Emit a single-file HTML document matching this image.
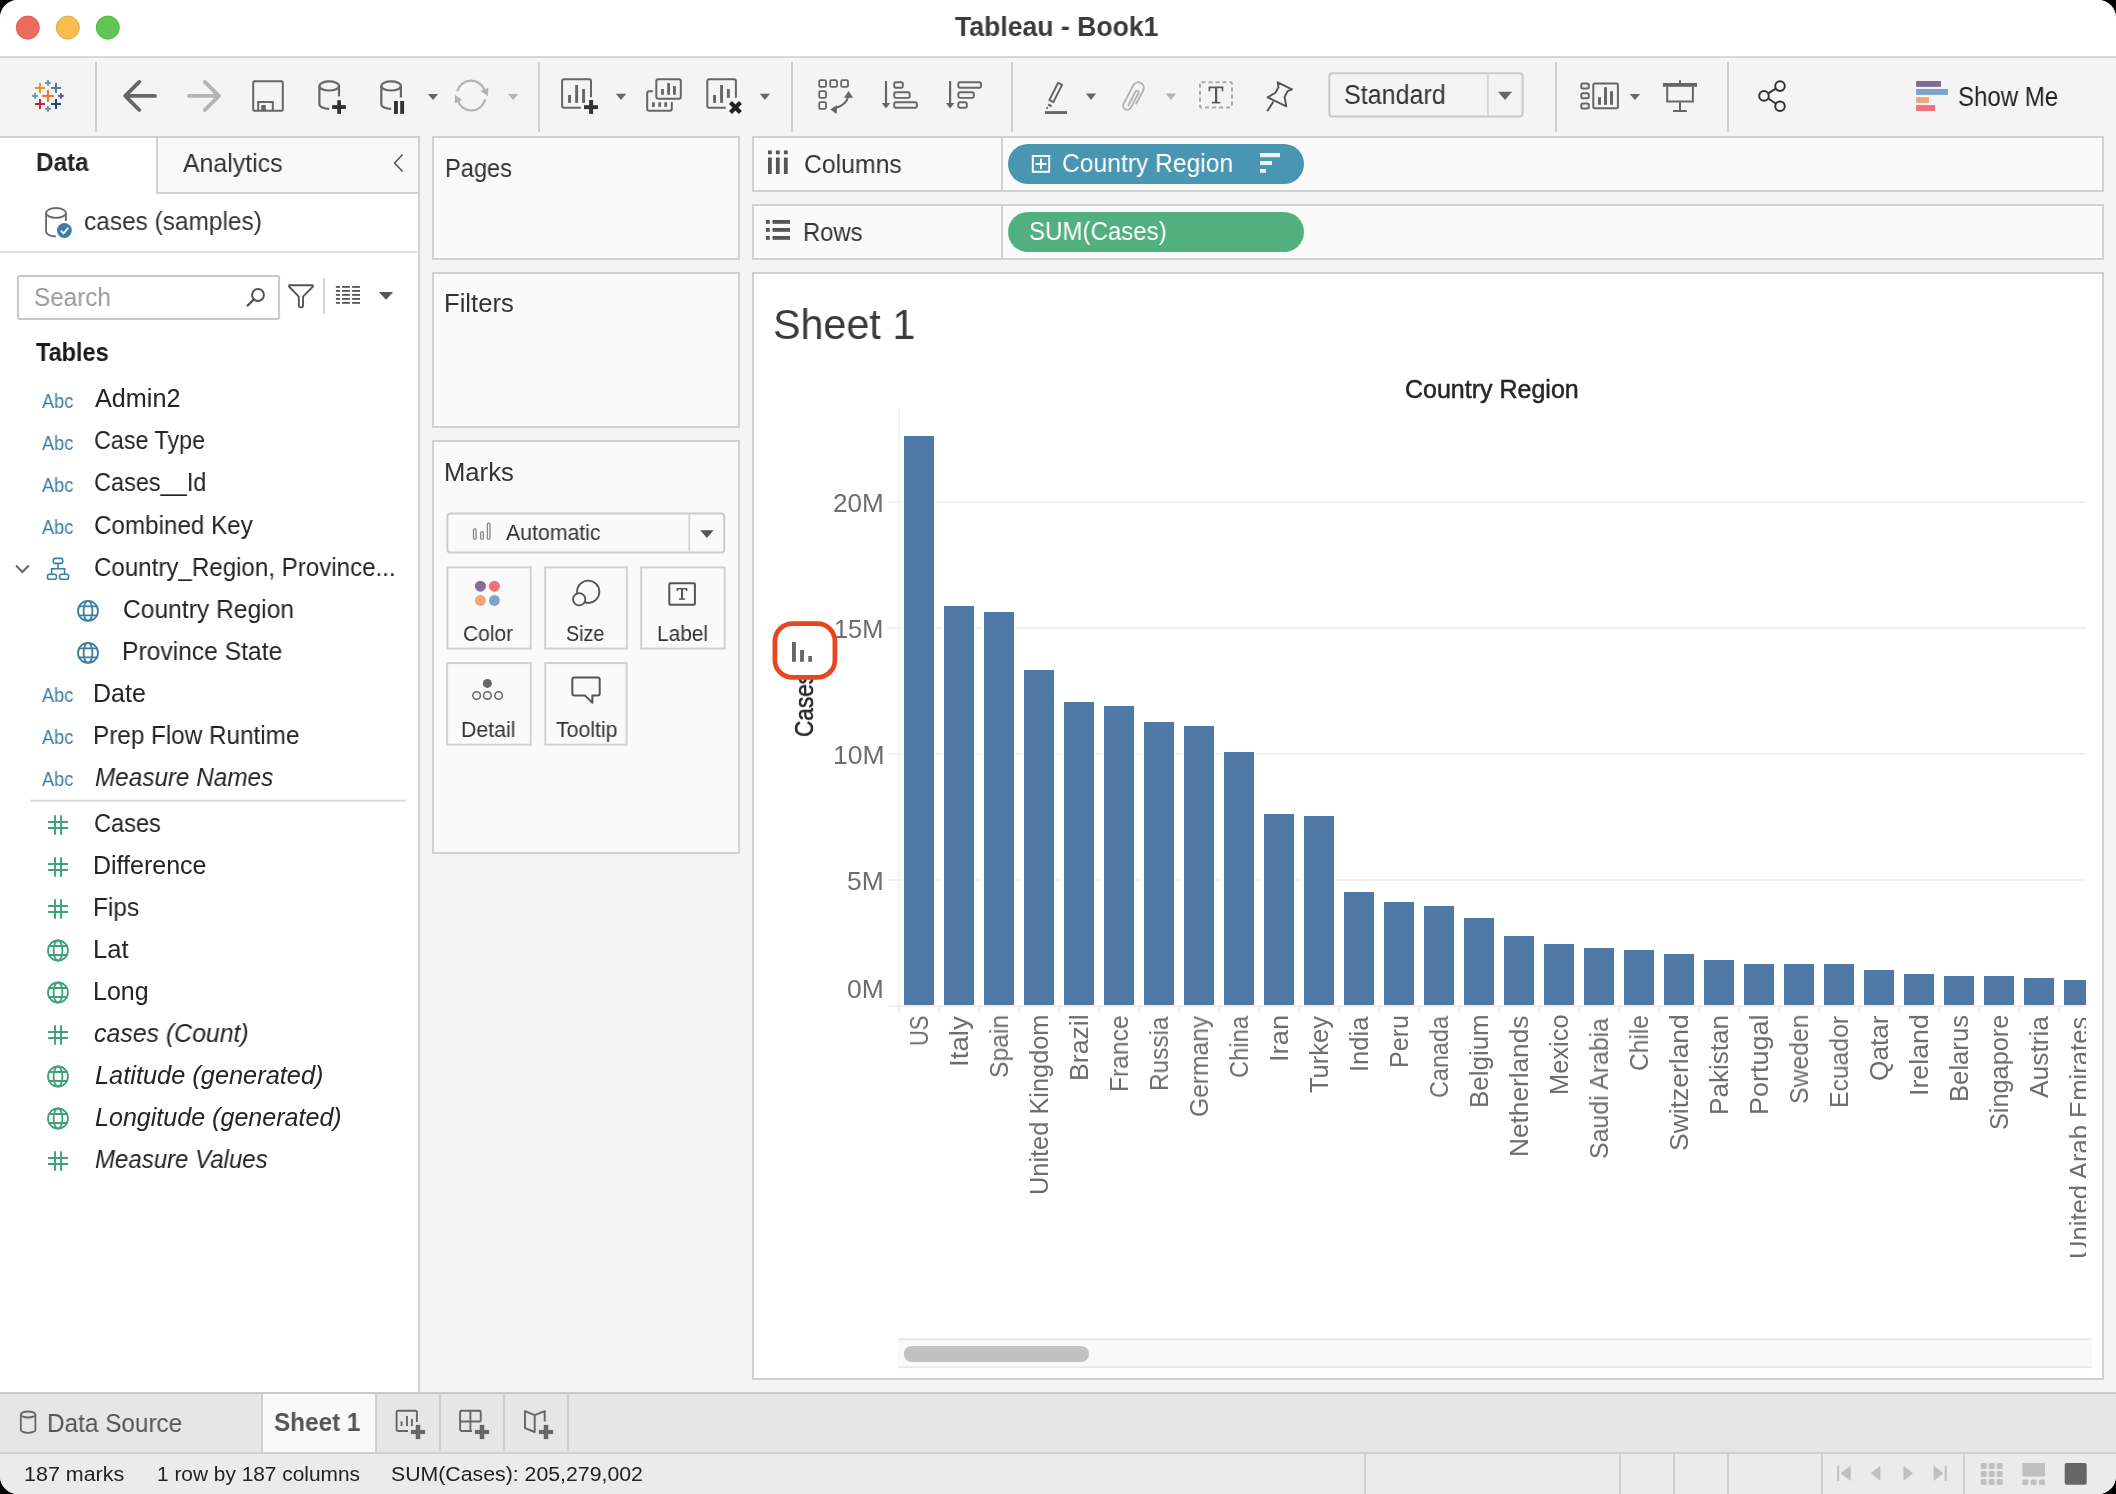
<!DOCTYPE html><html><head><meta charset="utf-8"><style>
html,body{margin:0;padding:0;background:#000;}
body{width:2116px;height:1494px;position:relative;overflow:hidden;font-family:"Liberation Sans",sans-serif;}
#win{position:absolute;left:0;top:0;width:2116px;height:1494px;border-radius:18px;overflow:hidden;background:#f3f3f3;}
.b{position:absolute;}
.t{position:absolute;line-height:1;white-space:nowrap;transform-origin:0 0;-webkit-font-smoothing:antialiased;will-change:transform;}
</style></head><body><div id="win">
<div class="b" style="left:0px;top:0px;width:2116px;height:57px;background:#ffffff;"></div>
<div class="b" style="left:0px;top:56px;width:2116px;height:2px;background:#d6d6d6;"></div>
<div class="b" style="left:0px;top:58px;width:2116px;height:1336px;background:#f4f4f4;"></div>
<div class="b" style="left:0px;top:136px;width:420px;height:1256px;background:#ffffff;"></div>
<div class="b" style="left:0px;top:136px;width:420px;height:2px;background:#d1d1d1;"></div>
<div class="b" style="left:418px;top:136px;width:2px;height:1256px;background:#d1d1d1;"></div>
<div class="b" style="left:156px;top:138px;width:262px;height:56px;background:#f8f8f8;"></div>
<div class="b" style="left:156px;top:138px;width:2px;height:56px;background:#d1d1d1;"></div>
<div class="b" style="left:156px;top:192px;width:262px;height:2px;background:#d1d1d1;"></div>
<div class="b" style="left:0px;top:251px;width:417px;height:2px;background:#e0e0e0;"></div>
<div class="b" style="left:432px;top:136px;width:308px;height:124px;background:#fafafa;border:2px solid #d1d1d1;box-sizing:border-box;"></div>
<div class="b" style="left:432px;top:272px;width:308px;height:156px;background:#fafafa;border:2px solid #d1d1d1;box-sizing:border-box;"></div>
<div class="b" style="left:432px;top:440px;width:308px;height:414px;background:#fafafa;border:2px solid #d1d1d1;box-sizing:border-box;"></div>
<div class="b" style="left:752px;top:136px;width:1352px;height:56px;background:#fafafa;border:2px solid #d1d1d1;box-sizing:border-box;"></div>
<div class="b" style="left:1001px;top:138px;width:2px;height:52px;background:#d1d1d1;"></div>
<div class="b" style="left:752px;top:204px;width:1352px;height:56px;background:#fafafa;border:2px solid #d1d1d1;box-sizing:border-box;"></div>
<div class="b" style="left:1001px;top:206px;width:2px;height:52px;background:#d1d1d1;"></div>
<div class="b" style="left:752px;top:272px;width:1352px;height:1108px;background:#ffffff;border:2px solid #d1d1d1;box-sizing:border-box;"></div>
<div class="b" style="left:0px;top:1392px;width:2116px;height:2px;background:#cacaca;"></div>
<div class="b" style="left:0px;top:1394px;width:2116px;height:58px;background:#e6e6e6;"></div>
<div class="b" style="left:261px;top:1394px;width:116px;height:58px;background:#f9f9f9;"></div>
<div class="b" style="left:261px;top:1394px;width:2px;height:58px;background:#cfcfcf;"></div>
<div class="b" style="left:375px;top:1394px;width:2px;height:58px;background:#cfcfcf;"></div>
<div class="b" style="left:439px;top:1394px;width:2px;height:57px;background:#cfcfcf;"></div>
<div class="b" style="left:503px;top:1394px;width:2px;height:57px;background:#cfcfcf;"></div>
<div class="b" style="left:567px;top:1394px;width:2px;height:57px;background:#cfcfcf;"></div>
<div class="b" style="left:0px;top:1452px;width:2116px;height:2px;background:#cfcfcf;"></div>
<div class="b" style="left:0px;top:1454px;width:2116px;height:40px;background:#ebebeb;"></div>
<div class="b" style="left:1364px;top:1454px;width:2px;height:40px;background:#d0d0d0;"></div>
<div class="b" style="left:1619px;top:1454px;width:2px;height:40px;background:#d0d0d0;"></div>
<div class="b" style="left:1673px;top:1454px;width:2px;height:40px;background:#d0d0d0;"></div>
<div class="b" style="left:1727px;top:1454px;width:2px;height:40px;background:#d0d0d0;"></div>
<div class="b" style="left:1821px;top:1454px;width:2px;height:40px;background:#d0d0d0;"></div>
<div class="b" style="left:1963px;top:1454px;width:2px;height:40px;background:#d0d0d0;"></div>
<div class="b" style="left:888px;top:501px;width:1198px;height:2px;background:#f0f0f0;"></div>
<div class="b" style="left:888px;top:627px;width:1198px;height:2px;background:#f0f0f0;"></div>
<div class="b" style="left:888px;top:753px;width:1198px;height:2px;background:#f0f0f0;"></div>
<div class="b" style="left:888px;top:879px;width:1198px;height:2px;background:#f0f0f0;"></div>
<div class="b" style="left:898px;top:408px;width:2px;height:600px;background:#f3f3f3;"></div>
<div class="b" style="left:888px;top:1005px;width:1198px;height:2px;background:#efefef;"></div>
<div class="b" style="left:898px;top:1007px;width:2px;height:6px;background:#ebebeb;"></div>
<div class="b" style="left:938px;top:1007px;width:2px;height:6px;background:#ebebeb;"></div>
<div class="b" style="left:978px;top:1007px;width:2px;height:6px;background:#ebebeb;"></div>
<div class="b" style="left:1018px;top:1007px;width:2px;height:6px;background:#ebebeb;"></div>
<div class="b" style="left:1058px;top:1007px;width:2px;height:6px;background:#ebebeb;"></div>
<div class="b" style="left:1098px;top:1007px;width:2px;height:6px;background:#ebebeb;"></div>
<div class="b" style="left:1138px;top:1007px;width:2px;height:6px;background:#ebebeb;"></div>
<div class="b" style="left:1178px;top:1007px;width:2px;height:6px;background:#ebebeb;"></div>
<div class="b" style="left:1218px;top:1007px;width:2px;height:6px;background:#ebebeb;"></div>
<div class="b" style="left:1258px;top:1007px;width:2px;height:6px;background:#ebebeb;"></div>
<div class="b" style="left:1298px;top:1007px;width:2px;height:6px;background:#ebebeb;"></div>
<div class="b" style="left:1338px;top:1007px;width:2px;height:6px;background:#ebebeb;"></div>
<div class="b" style="left:1378px;top:1007px;width:2px;height:6px;background:#ebebeb;"></div>
<div class="b" style="left:1418px;top:1007px;width:2px;height:6px;background:#ebebeb;"></div>
<div class="b" style="left:1458px;top:1007px;width:2px;height:6px;background:#ebebeb;"></div>
<div class="b" style="left:1498px;top:1007px;width:2px;height:6px;background:#ebebeb;"></div>
<div class="b" style="left:1538px;top:1007px;width:2px;height:6px;background:#ebebeb;"></div>
<div class="b" style="left:1578px;top:1007px;width:2px;height:6px;background:#ebebeb;"></div>
<div class="b" style="left:1618px;top:1007px;width:2px;height:6px;background:#ebebeb;"></div>
<div class="b" style="left:1658px;top:1007px;width:2px;height:6px;background:#ebebeb;"></div>
<div class="b" style="left:1698px;top:1007px;width:2px;height:6px;background:#ebebeb;"></div>
<div class="b" style="left:1738px;top:1007px;width:2px;height:6px;background:#ebebeb;"></div>
<div class="b" style="left:1778px;top:1007px;width:2px;height:6px;background:#ebebeb;"></div>
<div class="b" style="left:1818px;top:1007px;width:2px;height:6px;background:#ebebeb;"></div>
<div class="b" style="left:1858px;top:1007px;width:2px;height:6px;background:#ebebeb;"></div>
<div class="b" style="left:1898px;top:1007px;width:2px;height:6px;background:#ebebeb;"></div>
<div class="b" style="left:1938px;top:1007px;width:2px;height:6px;background:#ebebeb;"></div>
<div class="b" style="left:1978px;top:1007px;width:2px;height:6px;background:#ebebeb;"></div>
<div class="b" style="left:2018px;top:1007px;width:2px;height:6px;background:#ebebeb;"></div>
<div class="b" style="left:2058px;top:1007px;width:2px;height:6px;background:#ebebeb;"></div>
<div class="b" style="left:902px;top:434px;width:34px;height:571px;background:#ffffff;"></div>
<div class="b" style="left:942px;top:604px;width:34px;height:401px;background:#ffffff;"></div>
<div class="b" style="left:982px;top:610px;width:34px;height:395px;background:#ffffff;"></div>
<div class="b" style="left:1022px;top:668px;width:34px;height:337px;background:#ffffff;"></div>
<div class="b" style="left:1062px;top:700px;width:34px;height:305px;background:#ffffff;"></div>
<div class="b" style="left:1102px;top:704px;width:34px;height:301px;background:#ffffff;"></div>
<div class="b" style="left:1142px;top:720px;width:34px;height:285px;background:#ffffff;"></div>
<div class="b" style="left:1182px;top:724px;width:34px;height:281px;background:#ffffff;"></div>
<div class="b" style="left:1222px;top:750px;width:34px;height:255px;background:#ffffff;"></div>
<div class="b" style="left:1262px;top:812px;width:34px;height:193px;background:#ffffff;"></div>
<div class="b" style="left:1302px;top:814px;width:34px;height:191px;background:#ffffff;"></div>
<div class="b" style="left:1342px;top:890px;width:34px;height:115px;background:#ffffff;"></div>
<div class="b" style="left:1382px;top:900px;width:34px;height:105px;background:#ffffff;"></div>
<div class="b" style="left:1422px;top:904px;width:34px;height:101px;background:#ffffff;"></div>
<div class="b" style="left:1462px;top:916px;width:34px;height:89px;background:#ffffff;"></div>
<div class="b" style="left:1502px;top:934px;width:34px;height:71px;background:#ffffff;"></div>
<div class="b" style="left:1542px;top:942px;width:34px;height:63px;background:#ffffff;"></div>
<div class="b" style="left:1582px;top:946px;width:34px;height:59px;background:#ffffff;"></div>
<div class="b" style="left:1622px;top:948px;width:34px;height:57px;background:#ffffff;"></div>
<div class="b" style="left:1662px;top:952px;width:34px;height:53px;background:#ffffff;"></div>
<div class="b" style="left:1702px;top:958px;width:34px;height:47px;background:#ffffff;"></div>
<div class="b" style="left:1742px;top:962px;width:34px;height:43px;background:#ffffff;"></div>
<div class="b" style="left:1782px;top:962px;width:34px;height:43px;background:#ffffff;"></div>
<div class="b" style="left:1822px;top:962px;width:34px;height:43px;background:#ffffff;"></div>
<div class="b" style="left:1862px;top:968px;width:34px;height:37px;background:#ffffff;"></div>
<div class="b" style="left:1902px;top:972px;width:34px;height:33px;background:#ffffff;"></div>
<div class="b" style="left:1942px;top:974px;width:34px;height:31px;background:#ffffff;"></div>
<div class="b" style="left:1982px;top:974px;width:34px;height:31px;background:#ffffff;"></div>
<div class="b" style="left:2022px;top:976px;width:34px;height:29px;background:#ffffff;"></div>
<div class="b" style="left:2062px;top:978px;width:24px;height:27px;background:#ffffff;"></div>
<div class="b" style="left:904px;top:436px;width:30px;height:569px;background:#4e79a7;"></div>
<div class="b" style="left:944px;top:606px;width:30px;height:399px;background:#4e79a7;"></div>
<div class="b" style="left:984px;top:612px;width:30px;height:393px;background:#4e79a7;"></div>
<div class="b" style="left:1024px;top:670px;width:30px;height:335px;background:#4e79a7;"></div>
<div class="b" style="left:1064px;top:702px;width:30px;height:303px;background:#4e79a7;"></div>
<div class="b" style="left:1104px;top:706px;width:30px;height:299px;background:#4e79a7;"></div>
<div class="b" style="left:1144px;top:722px;width:30px;height:283px;background:#4e79a7;"></div>
<div class="b" style="left:1184px;top:726px;width:30px;height:279px;background:#4e79a7;"></div>
<div class="b" style="left:1224px;top:752px;width:30px;height:253px;background:#4e79a7;"></div>
<div class="b" style="left:1264px;top:814px;width:30px;height:191px;background:#4e79a7;"></div>
<div class="b" style="left:1304px;top:816px;width:30px;height:189px;background:#4e79a7;"></div>
<div class="b" style="left:1344px;top:892px;width:30px;height:113px;background:#4e79a7;"></div>
<div class="b" style="left:1384px;top:902px;width:30px;height:103px;background:#4e79a7;"></div>
<div class="b" style="left:1424px;top:906px;width:30px;height:99px;background:#4e79a7;"></div>
<div class="b" style="left:1464px;top:918px;width:30px;height:87px;background:#4e79a7;"></div>
<div class="b" style="left:1504px;top:936px;width:30px;height:69px;background:#4e79a7;"></div>
<div class="b" style="left:1544px;top:944px;width:30px;height:61px;background:#4e79a7;"></div>
<div class="b" style="left:1584px;top:948px;width:30px;height:57px;background:#4e79a7;"></div>
<div class="b" style="left:1624px;top:950px;width:30px;height:55px;background:#4e79a7;"></div>
<div class="b" style="left:1664px;top:954px;width:30px;height:51px;background:#4e79a7;"></div>
<div class="b" style="left:1704px;top:960px;width:30px;height:45px;background:#4e79a7;"></div>
<div class="b" style="left:1744px;top:964px;width:30px;height:41px;background:#4e79a7;"></div>
<div class="b" style="left:1784px;top:964px;width:30px;height:41px;background:#4e79a7;"></div>
<div class="b" style="left:1824px;top:964px;width:30px;height:41px;background:#4e79a7;"></div>
<div class="b" style="left:1864px;top:970px;width:30px;height:35px;background:#4e79a7;"></div>
<div class="b" style="left:1904px;top:974px;width:30px;height:31px;background:#4e79a7;"></div>
<div class="b" style="left:1944px;top:976px;width:30px;height:29px;background:#4e79a7;"></div>
<div class="b" style="left:1984px;top:976px;width:30px;height:29px;background:#4e79a7;"></div>
<div class="b" style="left:2024px;top:978px;width:30px;height:27px;background:#4e79a7;"></div>
<div class="b" style="left:2064px;top:980px;width:22px;height:25px;background:#4e79a7;"></div>
<svg class="b" style="left:0;top:0" width="2116" height="1494" viewBox="0 0 2116 1494"><circle cx="27.8" cy="27.6" r="11.6" fill="#ed6a5e" stroke="#d8534a" stroke-width="0.8"/><circle cx="67.8" cy="27.6" r="11.6" fill="#f5bf4f" stroke="#d9a33c" stroke-width="0.8"/><circle cx="107.8" cy="27.6" r="11.6" fill="#61c554" stroke="#4ea940" stroke-width="0.8"/><rect x="41.95" y="94.95" width="12" height="2" fill="#e8762d"/><rect x="46.95" y="89.95" width="2" height="12" fill="#e8762d"/><rect x="34.97" y="86.97" width="10" height="2" fill="#eb912b"/><rect x="38.97" y="82.97" width="2" height="10" fill="#eb912b"/><rect x="50.98" y="86.97" width="10" height="2" fill="#4f7d92"/><rect x="54.98" y="82.97" width="2" height="10" fill="#4f7d92"/><rect x="34.97" y="102.98" width="10" height="2" fill="#c72035"/><rect x="38.97" y="98.98" width="2" height="10" fill="#c72035"/><rect x="50.98" y="102.98" width="10" height="2" fill="#1f457e"/><rect x="54.98" y="98.98" width="2" height="10" fill="#1f457e"/><rect x="45.05" y="81.9" width="5.8" height="2" fill="#6f97a5"/><rect x="46.95" y="80" width="2" height="5.8" fill="#6f97a5"/><rect x="32.06" y="94.95" width="5.8" height="2" fill="#7199a6"/><rect x="33.96" y="93.05" width="2" height="5.8" fill="#7199a6"/><rect x="58.03" y="94.95" width="5.8" height="2" fill="#59629e"/><rect x="59.93" y="93.05" width="2" height="5.8" fill="#59629e"/><rect x="45.05" y="107.93" width="5.8" height="2" fill="#7e8dba"/><rect x="46.95" y="106.03" width="2" height="5.8" fill="#7e8dba"/><rect x="95" y="62" width="2" height="70" fill="#d0d0d0"/><rect x="538" y="62" width="2" height="70" fill="#d0d0d0"/><rect x="791" y="62" width="2" height="70" fill="#d0d0d0"/><rect x="1011" y="62" width="2" height="70" fill="#d0d0d0"/><rect x="1555" y="62" width="2" height="70" fill="#d0d0d0"/><rect x="1727" y="62" width="2" height="70" fill="#d0d0d0"/><path d="M139.3 81.9L125.2 95.9L139.3 110M125.5 95.9H155" fill="none" stroke="#666666" stroke-width="3.8" stroke-linecap="round" stroke-linejoin="round"/><path d="M204.8 81.9L218.9 95.9L204.8 110M218.5 95.9H189" fill="none" stroke="#b3b3b3" stroke-width="3.8" stroke-linecap="round" stroke-linejoin="round"/><rect x="253.2" y="81.2" width="29.6" height="29.6" rx="1.5" fill="none" stroke="#666666" stroke-width="2"/><path d="M258.2 110.8V102H272.8V110.8" fill="none" stroke="#666666" stroke-width="2"/><rect x="261.2" y="105" width="4.6" height="6" fill="#666666"/><ellipse cx="329.2" cy="85.9" rx="9.8" ry="4.6" fill="none" stroke="#666666" stroke-width="2.2"/><path d="M319.4 85.9V104.3A9.8 4.6 0 0 0 329.2 108.9" fill="none" stroke="#666666" stroke-width="2.2"/><path d="M339 85.9V96.5" fill="none" stroke="#666666" stroke-width="2.2"/><rect x="332.1" y="105.1" width="13.8" height="3.9" fill="#333333"/><rect x="337.2" y="100.2" width="3.8" height="13.7" fill="#333333"/><ellipse cx="391.1" cy="85.9" rx="9.8" ry="4.6" fill="none" stroke="#666666" stroke-width="2.2"/><path d="M381.3 85.9V104.3A9.8 4.6 0 0 0 391.1 108.9" fill="none" stroke="#666666" stroke-width="2.2"/><path d="M400.9 85.9V97.5" fill="none" stroke="#666666" stroke-width="2.2"/><rect x="394" y="101" width="3.9" height="12.9" fill="#333333"/><rect x="400.2" y="101" width="3.9" height="12.9" fill="#333333"/><path d="M427.8 93.9L438.2 93.9L433 100Z" fill="#666666"/><path d="M457.3 91.5A14.2 14.2 0 0 1 484.6 90.5" fill="none" stroke="#b3b3b3" stroke-width="2.2"/><path d="M485.2 99.5A14.2 14.2 0 0 1 457.8 100.5" fill="none" stroke="#b3b3b3" stroke-width="2.2"/><path d="M480.5 91L488.3 87.8L488 96.3Z" fill="#b3b3b3"/><path d="M462.3 99.8L454.8 103.5L455 95Z" fill="#b3b3b3"/><path d="M507.9 93.9L518.2 93.9L513.05 100Z" fill="#b3b3b3"/><path d="M580.8 107.8H564.1A2 2 0 0 1 562.1 105.8V81.2A2 2 0 0 1 564.1 79.2H589A2 2 0 0 1 591 81.2V97.2" fill="none" stroke="#666666" stroke-width="2"/><rect x="568.1" y="95" width="2.9" height="7.9" fill="#666666"/><rect x="575.2" y="85" width="2.9" height="17.9" fill="#666666"/><rect x="582.1" y="89" width="2.9" height="13.9" fill="#666666"/><rect x="584" y="105.2" width="14" height="3.9" fill="#333333"/><rect x="589.1" y="100" width="4" height="13.9" fill="#333333"/><path d="M615.8 93.8L626.2 93.8L621 100Z" fill="#666666"/><rect x="656.3" y="79.2" width="24.5" height="19.5" rx="2" fill="none" stroke="#666666" stroke-width="2"/><rect x="661.1" y="89" width="2.8" height="5.8" fill="#666666"/><rect x="667.2" y="83" width="2.8" height="11.8" fill="#666666"/><rect x="673" y="86.1" width="2.9" height="8.7" fill="#666666"/><path d="M652.8 91.2H649.2A2 2 0 0 0 647.2 93.2V108.7A2 2 0 0 0 649.2 110.7H669.8A2 2 0 0 0 671.8 108.7V102" fill="none" stroke="#666666" stroke-width="2"/><rect x="652" y="102.3" width="2.8" height="4.6" fill="#666666"/><rect x="658.3" y="102.3" width="2.8" height="4.6" fill="#666666"/><rect x="664.3" y="102.3" width="2.8" height="4.6" fill="#666666"/><path d="M725.8 107.8H709.3A2 2 0 0 1 707.3 105.8V81.2A2 2 0 0 1 709.3 79.2H733.9A2 2 0 0 1 735.9 81.2V97.8" fill="none" stroke="#666666" stroke-width="2"/><rect x="713.1" y="95" width="2.9" height="7.9" fill="#666666"/><rect x="720.1" y="85" width="2.9" height="17.9" fill="#666666"/><rect x="726.9" y="89" width="2.9" height="8.8" fill="#666666"/><path d="M730.5 102.5L740.4 112.4M740.4 102.5L730.5 112.4" stroke="#222" stroke-width="4.2"/><path d="M759.8 93.8L770 93.8L764.9 100Z" fill="#666666"/><rect x="819.2" y="80.1" width="6.8" height="6.8" rx="1.5" fill="none" stroke="#666666" stroke-width="1.8"/><rect x="830.2" y="80.1" width="6.8" height="6.8" rx="1.5" fill="none" stroke="#666666" stroke-width="1.8"/><rect x="841.2" y="80.1" width="6.8" height="6.8" rx="1.5" fill="none" stroke="#666666" stroke-width="1.8"/><rect x="819.2" y="91.1" width="6.8" height="6.8" rx="1.5" fill="none" stroke="#666666" stroke-width="1.8"/><rect x="819.2" y="102.1" width="6.8" height="6.8" rx="1.5" fill="none" stroke="#666666" stroke-width="1.8"/><path d="M835 108.3Q846.5 105 848.4 96" fill="none" stroke="#666666" stroke-width="2"/><path d="M848.6 91.1L853.1 97.7L843.9 97.7Z" fill="#666666"/><path d="M830.2 109.5L836.8 105.2L836.8 114Z" fill="#666666"/><path d="M886 81V104" stroke="#666666" stroke-width="2.2"/><path d="M881.8 103L890.2 103L886 108.6Z" fill="#666666"/><rect x="894.2" y="82.2" width="8.6" height="5.6" rx="1.8" fill="none" stroke="#666666" stroke-width="1.9"/><rect x="894.2" y="92.3" width="15.5" height="5.6" rx="1.8" fill="none" stroke="#666666" stroke-width="1.9"/><rect x="894.2" y="102.2" width="22.7" height="5.6" rx="1.8" fill="none" stroke="#666666" stroke-width="1.9"/><path d="M950.1 81V104" stroke="#666666" stroke-width="2.2"/><path d="M945.9 103L954.3 103L950.1 108.6Z" fill="#666666"/><rect x="958.3" y="82.2" width="22.7" height="5.6" rx="1.8" fill="none" stroke="#666666" stroke-width="1.9"/><rect x="958.3" y="92.3" width="15.5" height="5.6" rx="1.8" fill="none" stroke="#666666" stroke-width="1.9"/><rect x="958.3" y="102.2" width="8.5" height="5.6" rx="1.8" fill="none" stroke="#666666" stroke-width="1.9"/><path d="M1058.0 82.9L1062.0 84.9L1053.4 102.1L1049.4 100.1Z" fill="none" stroke="#666666" stroke-width="2" stroke-linejoin="round"/><path d="M1048.2 104.6L1051.6 106.3M1046.4 107.6L1047.9 108.4" stroke="#666666" stroke-width="2.2"/><rect x="1045" y="111.1" width="22" height="2.9" fill="#666666"/><path d="M1085.9 93.6L1096.1 93.6L1091 100Z" fill="#666666"/><path d="M1136.3 103.5L1143.4 90A5.6 5.6 0 0 0 1133.3 85.2L1123.6 103.8A4.1 4.1 0 0 0 1130.9 107.6L1138.6 92.9A1.7 1.7 0 0 0 1135.6 91.4L1128.4 105.3" fill="none" stroke="#b3b3b3" stroke-width="1.9" stroke-linecap="round"/><path d="M1165.9 93.6L1176.1 93.6L1171 100Z" fill="#b3b3b3"/><rect x="1200" y="82.2" width="32" height="25.3" rx="1.5" fill="none" stroke="#aaaaaa" stroke-width="2" stroke-dasharray="4 3"/><path d="M1209.4 91.2V87.4H1222.5V91.2" fill="none" stroke="#555" stroke-width="1.6"/><rect x="1215" y="87" width="2.2" height="15.5" fill="#555"/><rect x="1211.8" y="101.8" width="8.5" height="1.6" fill="#555"/><path d="M1277.6 82.3L1292 89.4L1287.6 91.2L1284.6 96.8L1286.3 106.4L1267.6 97.4L1275.4 92.7L1278.5 87.2Z" fill="none" stroke="#555555" stroke-width="1.9" stroke-linejoin="round"/><path d="M1273.5 101.5L1267.2 111.3" stroke="#555" stroke-width="1.9"/><rect x="1329.3" y="73.3" width="193.3" height="43.2" rx="3" fill="none" stroke="#c9c9c9" stroke-width="2"/><rect x="1486.9" y="74.3" width="1.9" height="41.2" fill="#d6d6d6"/><path d="M1498 91.8L1512 91.8L1505 100.1Z" fill="#666666"/><rect x="1581.3" y="83.5" width="7.5" height="5" rx="1.5" fill="none" stroke="#666666" stroke-width="2"/><rect x="1581.3" y="93.3" width="7.5" height="5" rx="1.5" fill="none" stroke="#666666" stroke-width="2"/><rect x="1581.3" y="103.4" width="7.5" height="5" rx="1.5" fill="none" stroke="#666666" stroke-width="2"/><rect x="1593.3" y="83.5" width="24.6" height="24.8" rx="1.5" fill="none" stroke="#666666" stroke-width="2"/><rect x="1598" y="97.2" width="3" height="7.6" fill="#666666"/><rect x="1604" y="87.2" width="3" height="17.6" fill="#666666"/><rect x="1610" y="91.2" width="3" height="13.6" fill="#666666"/><path d="M1629.8 93.9L1640.1 93.9L1634.95 99.9Z" fill="#666666"/><rect x="1662.9" y="83" width="34.1" height="3.8" fill="#666666"/><rect x="1679" y="80.3" width="2" height="3" fill="#666666"/><path d="M1667.2 86.8V101.6H1692.9V86.8" fill="none" stroke="#666666" stroke-width="2"/><path d="M1680 102.6V110.8M1673 111H1686.8" fill="none" stroke="#666666" stroke-width="2"/><circle cx="1780" cy="86.1" r="4.8" fill="none" stroke="#333333" stroke-width="2"/><circle cx="1764" cy="95.9" r="4.8" fill="none" stroke="#333333" stroke-width="2"/><circle cx="1780" cy="106.2" r="4.8" fill="none" stroke="#333333" stroke-width="2"/><path d="M1768.2 93.3L1775.8 88.6M1768.2 98.5L1775.8 103.5" stroke="#333333" stroke-width="2"/><rect x="1916.1" y="81" width="24.9" height="5.9" fill="#816b96"/><rect x="1916.1" y="89" width="31.9" height="5.9" fill="#7fa4cb"/><rect x="1916.1" y="97.2" width="12.8" height="5.7" fill="#f0a57b"/><rect x="1916.1" y="105.1" width="19" height="5.9" fill="#f2707f"/><path d="M402.6 154.5L394.6 163L402.6 171.5" fill="none" stroke="#555" stroke-width="1.6"/><ellipse cx="56" cy="212.9" rx="9.9" ry="4.9" fill="none" stroke="#666666" stroke-width="1.8"/><path d="M46.1 212.9V231.6A9.9 4.9 0 0 0 55.7 236.5" fill="none" stroke="#666666" stroke-width="1.8"/><path d="M65.9 212.9V221" fill="none" stroke="#666666" stroke-width="1.8"/><circle cx="64.4" cy="230.5" r="7.4" fill="#3a80a3"/><path d="M60.7 230.7L63.5 233.4L68.2 227.9" fill="none" stroke="#fff" stroke-width="1.8"/><rect x="17.9" y="275.9" width="261.2" height="43.2" rx="2" fill="#fff" stroke="#c8c8c8" stroke-width="2"/><circle cx="258" cy="295" r="5.9" fill="none" stroke="#555" stroke-width="2"/><path d="M253.6 299.6L247.6 305.6" stroke="#555" stroke-width="2.2" stroke-linecap="round"/><path d="M289.5 284.9A1 1 0 0 1 290.3 285.2H312.3A1 1 0 0 1 313 286.5L303 296.6V305.6A1.8 1.8 0 0 1 301.2 307.4H300.6A1.8 1.8 0 0 1 298.8 305.6V296.6L289 286.5Z" fill="none" stroke="#555" stroke-width="1.9" stroke-linejoin="round"/><rect x="323" y="278.2" width="2" height="35.5" fill="#d4d4d4"/><rect x="335.9" y="286" width="4.1" height="1.8" fill="#555"/><rect x="342.1" y="286" width="7.8" height="1.8" fill="#555"/><rect x="352.1" y="286" width="7.9" height="1.8" fill="#555"/><rect x="335.9" y="290" width="4.1" height="1.8" fill="#555"/><rect x="342.1" y="290" width="7.8" height="1.8" fill="#555"/><rect x="352.1" y="290" width="7.9" height="1.8" fill="#555"/><rect x="335.9" y="294" width="4.1" height="1.8" fill="#555"/><rect x="342.1" y="294" width="7.8" height="1.8" fill="#555"/><rect x="352.1" y="294" width="7.9" height="1.8" fill="#555"/><rect x="335.9" y="298" width="4.1" height="1.8" fill="#555"/><rect x="342.1" y="298" width="7.8" height="1.8" fill="#555"/><rect x="352.1" y="298" width="7.9" height="1.8" fill="#555"/><rect x="335.9" y="302" width="4.1" height="1.8" fill="#555"/><rect x="342.1" y="302" width="7.8" height="1.8" fill="#555"/><rect x="352.1" y="302" width="7.9" height="1.8" fill="#555"/><path d="M378.9 292L393.1 292L386 299.8Z" fill="#555"/><path d="M16 565.5L22.4 572L28.8 565.5" fill="none" stroke="#666666" stroke-width="2"/><rect x="53.3" y="558.4" width="9.4" height="5" rx="1.8" fill="none" stroke="#3c7fa3" stroke-width="1.6"/><path d="M58 563.4V568.7M51.6 574.3V568.7H64.6V574.3" fill="none" stroke="#3c7fa3" stroke-width="1.6"/><rect x="47.5" y="574.3" width="8.9" height="5" rx="1.8" fill="none" stroke="#3c7fa3" stroke-width="1.6"/><rect x="59.6" y="574.3" width="8.9" height="5" rx="1.8" fill="none" stroke="#3c7fa3" stroke-width="1.6"/><circle cx="88" cy="610.9" r="10" fill="none" stroke="#3c7fa3" stroke-width="1.8"/><ellipse cx="88" cy="610.9" rx="4.4" ry="10" fill="none" stroke="#3c7fa3" stroke-width="1.8"/><path d="M78.5 606.4H97.5M78.5 615.4H97.5" stroke="#3c7fa3" stroke-width="1.8"/><circle cx="88" cy="652.9" r="10" fill="none" stroke="#3c7fa3" stroke-width="1.8"/><ellipse cx="88" cy="652.9" rx="4.4" ry="10" fill="none" stroke="#3c7fa3" stroke-width="1.8"/><path d="M78.5 648.4H97.5M78.5 657.4H97.5" stroke="#3c7fa3" stroke-width="1.8"/><rect x="30" y="799.7" width="376" height="2" fill="#dcdcdc"/><path d="M55 815.3V834.7M61 815.3V834.7M48.1 822H67.9M48.1 828H67.9" stroke="#40a078" stroke-width="1.9"/><path d="M55 857.3V876.7M61 857.3V876.7M48.1 864H67.9M48.1 870H67.9" stroke="#40a078" stroke-width="1.9"/><path d="M55 899.3V918.7M61 899.3V918.7M48.1 906H67.9M48.1 912H67.9" stroke="#40a078" stroke-width="1.9"/><circle cx="58" cy="950.5" r="10" fill="none" stroke="#40a078" stroke-width="1.8"/><ellipse cx="58" cy="950.5" rx="4.4" ry="10" fill="none" stroke="#40a078" stroke-width="1.8"/><path d="M48.5 946H67.5M48.5 955H67.5" stroke="#40a078" stroke-width="1.8"/><circle cx="58" cy="992.5" r="10" fill="none" stroke="#40a078" stroke-width="1.8"/><ellipse cx="58" cy="992.5" rx="4.4" ry="10" fill="none" stroke="#40a078" stroke-width="1.8"/><path d="M48.5 988H67.5M48.5 997H67.5" stroke="#40a078" stroke-width="1.8"/><path d="M55 1025.3V1044.7M61 1025.3V1044.7M48.1 1032H67.9M48.1 1038H67.9" stroke="#40a078" stroke-width="1.9"/><circle cx="58" cy="1076.5" r="10" fill="none" stroke="#40a078" stroke-width="1.8"/><ellipse cx="58" cy="1076.5" rx="4.4" ry="10" fill="none" stroke="#40a078" stroke-width="1.8"/><path d="M48.5 1072H67.5M48.5 1081H67.5" stroke="#40a078" stroke-width="1.8"/><circle cx="58" cy="1118.5" r="10" fill="none" stroke="#40a078" stroke-width="1.8"/><ellipse cx="58" cy="1118.5" rx="4.4" ry="10" fill="none" stroke="#40a078" stroke-width="1.8"/><path d="M48.5 1114H67.5M48.5 1123H67.5" stroke="#40a078" stroke-width="1.8"/><path d="M55 1151.3V1170.7M61 1151.3V1170.7M48.1 1158H67.9M48.1 1164H67.9" stroke="#40a078" stroke-width="1.9"/><path d="M768 150.5h3.8v3.8h-3.8zM775.9 150.5h3.8v3.8h-3.8zM783.9 150.5h3.8v3.8h-3.8z" fill="#555"/><path d="M768 157.5h3.8v16.5h-3.8zM775.9 157.5h3.8v16.5h-3.8zM783.9 157.5h3.8v16.5h-3.8z" fill="#555"/><rect x="766" y="220" width="3.8" height="3.8" fill="#555"/><rect x="772.5" y="220" width="17.5" height="3.8" fill="#555"/><rect x="766" y="228" width="3.8" height="3.8" fill="#555"/><rect x="772.5" y="228" width="17.5" height="3.8" fill="#555"/><rect x="766" y="236" width="3.8" height="3.8" fill="#555"/><rect x="772.5" y="236" width="17.5" height="3.8" fill="#555"/><rect x="1008" y="144" width="296" height="40" rx="20" fill="#4996b2"/><rect x="1008" y="212" width="296" height="40" rx="20" fill="#52b07f"/><rect x="1032.8" y="156" width="16.4" height="15.8" fill="none" stroke="#fff" stroke-width="2"/><path d="M1041 158.5V169.3M1035.6 163.9H1046.4" stroke="#fff" stroke-width="2"/><rect x="1260" y="153" width="20" height="4.2" fill="#eef3f6"/><rect x="1260" y="161" width="12" height="4" fill="#eef3f6"/><rect x="1260" y="169" width="6" height="3.8" fill="#eef3f6"/><rect x="447.4" y="513.4" width="276.9" height="39.1" rx="3" fill="#fafafa" stroke="#cccccc" stroke-width="2"/><rect x="688.4" y="514.4" width="1.8" height="37.1" fill="#d4d4d4"/><path d="M700.2 530.2L713.6 530.2L706.9 537.9Z" fill="#555"/><rect x="473.5" y="528.9" width="2.6" height="10.3" rx="1" fill="none" stroke="#888" stroke-width="1.3"/><rect x="480.7" y="531.7" width="2.6" height="7.5" rx="1" fill="none" stroke="#888" stroke-width="1.3"/><rect x="487.4" y="523.2" width="2.6" height="16" rx="1" fill="none" stroke="#888" stroke-width="1.3"/><rect x="447.4" y="567.3" width="83.3" height="81.3" fill="none" stroke="#d0d0d0" stroke-width="2"/><rect x="545.2" y="567.3" width="81.7" height="81.3" fill="none" stroke="#d0d0d0" stroke-width="2"/><rect x="641.2" y="567.3" width="83.5" height="81.3" fill="none" stroke="#d0d0d0" stroke-width="2"/><rect x="447.1" y="663.1" width="83.6" height="81.6" fill="none" stroke="#d0d0d0" stroke-width="2"/><rect x="545.3" y="663.1" width="81.3" height="81.6" fill="none" stroke="#d0d0d0" stroke-width="2"/><circle cx="480.4" cy="586.2" r="5.5" fill="#866e9c"/><circle cx="494.4" cy="586.2" r="5.5" fill="#f0707e"/><circle cx="480.4" cy="600.4" r="5.5" fill="#f0a57a"/><circle cx="494.4" cy="600.4" r="5.5" fill="#7fa5cc"/><circle cx="588.2" cy="591.8" r="11.2" fill="none" stroke="#555" stroke-width="1.8"/><circle cx="579.2" cy="599.3" r="6.1" fill="#fafafa" stroke="#555" stroke-width="1.8"/><rect x="669.3" y="583.3" width="25.6" height="21.4" rx="1" fill="none" stroke="#555" stroke-width="2"/><path d="M677.3 591V588.8H686.6V591" fill="none" stroke="#555" stroke-width="1.5"/><rect x="681" y="588.5" width="2.1" height="10.6" fill="#555"/><rect x="678.9" y="598.4" width="6.2" height="1.4" fill="#555"/><circle cx="487.4" cy="683.4" r="4.5" fill="#666"/><circle cx="476.6" cy="695.5" r="3.8" fill="none" stroke="#666" stroke-width="1.5"/><circle cx="487.4" cy="695.5" r="3.8" fill="none" stroke="#666" stroke-width="1.5"/><circle cx="498.6" cy="695.5" r="3.8" fill="none" stroke="#666" stroke-width="1.5"/><path d="M585.1 695.6H574.3A2 2 0 0 1 572.3 693.6V679.4A2 2 0 0 1 574.3 677.4H597.7A2 2 0 0 1 599.7 679.4V693.6A2 2 0 0 1 597.7 695.6H592.4V702.7Z" fill="none" stroke="#555" stroke-width="2" stroke-linejoin="round"/><rect x="898" y="1338.3" width="1194" height="29.7" fill="#f9f9f9"/><rect x="898" y="1338.3" width="1194" height="1.8" fill="#e8e8e8"/><rect x="898" y="1366.3" width="1194" height="1.8" fill="#e8e8e8"/><rect x="903.8" y="1346" width="185.2" height="16" rx="8" fill="#c1c1c1"/><ellipse cx="28.1" cy="1414.5" rx="7.3" ry="3" fill="none" stroke="#666666" stroke-width="1.8"/><path d="M20.8 1414.5V1429.8A7.3 3 0 0 0 35.4 1429.8V1414.5" fill="none" stroke="#666666" stroke-width="1.8"/><path d="M408 1431H398.1A1.5 1.5 0 0 1 396.6 1429.5V1412.2A1.5 1.5 0 0 1 398.1 1410.7H415.4A1.5 1.5 0 0 1 416.9 1412.2V1421.9" fill="none" stroke="#666666" stroke-width="1.9"/><rect x="400.6" y="1421.3" width="1.9" height="4.7" fill="#666666"/><rect x="406" y="1416" width="1.9" height="10" fill="#666666"/><rect x="411" y="1419" width="1.9" height="7" fill="#666666"/><rect x="410.95" y="1429.95" width="14.1" height="4.1" fill="#666666"/><rect x="415.75" y="1424.9" width="4.5" height="14.2" fill="#666666"/><path d="M472 1431H461.6A1.5 1.5 0 0 1 460.1 1429.5V1412.2A1.5 1.5 0 0 1 461.6 1410.7H479.2A1.5 1.5 0 0 1 480.7 1412.2V1421.5M460.1 1421.5H480.7M470.4 1410.7V1431" fill="none" stroke="#666666" stroke-width="1.9"/><rect x="474.95" y="1429.95" width="14.1" height="4.1" fill="#666666"/><rect x="479.75" y="1424.9" width="4.5" height="14.2" fill="#666666"/><path d="M525 1411.2L534.7 1415.2V1432L525 1428.2Z M534.7 1415.2L544.7 1411.2V1421.5" fill="none" stroke="#666666" stroke-width="1.9" stroke-linejoin="round"/><rect x="538.95" y="1429.95" width="14.1" height="4.1" fill="#666666"/><rect x="543.75" y="1424.9" width="4.5" height="14.2" fill="#666666"/><rect x="1837.2" y="1465.6" width="2" height="15.4" fill="#c0c0c0"/><path d="M1840.5 1473.3L1850.7 1465.6V1481Z" fill="#c0c0c0"/><path d="M1870.8 1473.3L1880.4 1465.6V1481Z" fill="#c0c0c0"/><path d="M1913 1473.3L1903.5 1465.6V1481Z" fill="#c0c0c0"/><rect x="1944.7" y="1465.6" width="2" height="15.4" fill="#c0c0c0"/><path d="M1943.5 1473.3L1933.6 1465.6V1481Z" fill="#c0c0c0"/><rect x="1980.7" y="1463" width="6" height="6" rx="1" fill="#c0c0c0"/><rect x="1980.7" y="1471" width="6" height="6" rx="1" fill="#c0c0c0"/><rect x="1980.7" y="1479" width="6" height="6" rx="1" fill="#c0c0c0"/><rect x="1988.7" y="1463" width="6" height="6" rx="1" fill="#c0c0c0"/><rect x="1988.7" y="1471" width="6" height="6" rx="1" fill="#c0c0c0"/><rect x="1988.7" y="1479" width="6" height="6" rx="1" fill="#c0c0c0"/><rect x="1996.7" y="1463" width="6" height="6" rx="1" fill="#c0c0c0"/><rect x="1996.7" y="1471" width="6" height="6" rx="1" fill="#c0c0c0"/><rect x="1996.7" y="1479" width="6" height="6" rx="1" fill="#c0c0c0"/><rect x="2022.3" y="1463" width="22.7" height="13.4" rx="1" fill="#c0c0c0"/><rect x="2022.3" y="1479.5" width="6" height="5.5" rx="1" fill="#c0c0c0"/><rect x="2030.65" y="1479.5" width="6" height="5.5" rx="1" fill="#c0c0c0"/><rect x="2039" y="1479.5" width="6" height="5.5" rx="1" fill="#c0c0c0"/><rect x="2064.7" y="1463" width="22" height="21.8" rx="2" fill="#666"/></svg>
<div class="t" style="font-size:27px;color:#3b3b3b;font-weight:700;left:955.40px;top:14.40px;transform:scaleX(0.9851);">Tableau - Book1</div>
<div class="t" style="font-size:27px;color:#333;left:1343.62px;top:82.20px;transform:scaleX(0.9289);">Standard</div>
<div class="t" style="font-size:27px;color:#222;left:1958.25px;top:83.60px;transform:scaleX(0.8905);">Show Me</div>
<div class="t" style="font-size:25.5px;color:#262626;font-weight:700;left:35.88px;top:150.40px;transform:scaleX(0.9528);">Data</div>
<div class="t" style="font-size:26px;color:#333;left:183.00px;top:150.00px;transform:scaleX(0.9571);">Analytics</div>
<div class="t" style="font-size:25px;color:#333;left:83.84px;top:208.90px;transform:scaleX(0.9771);">cases (samples)</div>
<div class="t" style="font-size:25px;color:#9a9a9a;left:33.84px;top:284.70px;transform:scaleX(0.9711);">Search</div>
<div class="t" style="font-size:25px;color:#1a1a1a;font-weight:700;left:36.20px;top:339.90px;transform:scaleX(0.9393);">Tables</div>
<div class="t" style="font-size:25px;color:#242424;left:94.90px;top:386.30px;transform:scaleX(1.0077);">Admin2</div>
<div class="t" style="font-size:25px;color:#242424;left:93.81px;top:428.37px;transform:scaleX(0.9325);">Case Type</div>
<div class="t" style="font-size:25px;color:#242424;left:93.80px;top:470.44px;transform:scaleX(0.9406);">Cases__Id</div>
<div class="t" style="font-size:25px;color:#242424;left:93.77px;top:512.51px;transform:scaleX(0.9680);">Combined Key</div>
<div class="t" style="font-size:25px;color:#242424;left:93.77px;top:554.58px;transform:scaleX(0.9647);">Country_Region, Province...</div>
<div class="t" style="font-size:25px;color:#242424;left:123.25px;top:596.65px;transform:scaleX(0.9846);">Country Region</div>
<div class="t" style="font-size:25px;color:#242424;left:122.48px;top:638.72px;transform:scaleX(0.9855);">Province State</div>
<div class="t" style="font-size:25px;color:#242424;left:93.06px;top:680.79px;transform:scaleX(0.9911);">Date</div>
<div class="t" style="font-size:25px;color:#242424;left:93.10px;top:722.86px;transform:scaleX(0.9709);">Prep Flow Runtime</div>
<div class="t" style="font-size:25px;color:#242424;font-style:italic;left:94.62px;top:764.93px;transform:scaleX(0.9714);">Measure Names</div>
<div class="t" style="font-size:25px;color:#242424;left:93.89px;top:811.00px;transform:scaleX(0.9433);">Cases</div>
<div class="t" style="font-size:25px;color:#242424;left:93.05px;top:853.00px;transform:scaleX(0.9980);">Difference</div>
<div class="t" style="font-size:25px;color:#242424;left:93.09px;top:895.00px;transform:scaleX(0.9776);">Fips</div>
<div class="t" style="font-size:25px;color:#242424;left:93.00px;top:937.00px;transform:scaleX(1.0248);">Lat</div>
<div class="t" style="font-size:25px;color:#242424;left:93.06px;top:979.00px;transform:scaleX(0.9912);">Long</div>
<div class="t" style="font-size:25px;color:#242424;font-style:italic;left:94.22px;top:1021.00px;transform:scaleX(0.9945);">cases (Count)</div>
<div class="t" style="font-size:25px;color:#242424;font-style:italic;left:94.60px;top:1063.00px;transform:scaleX(1.0149);">Latitude (generated)</div>
<div class="t" style="font-size:25px;color:#242424;font-style:italic;left:94.61px;top:1105.00px;transform:scaleX(1.0027);">Longitude (generated)</div>
<div class="t" style="font-size:25px;color:#242424;font-style:italic;left:94.62px;top:1147.00px;transform:scaleX(0.9606);">Measure Values</div>
<div class="t" style="font-size:25.5px;color:#333;left:444.75px;top:156.00px;transform:scaleX(0.9264);">Pages</div>
<div class="t" style="font-size:25.5px;color:#333;left:444.00px;top:291.20px;transform:scaleX(1.0056);">Filters</div>
<div class="t" style="font-size:25.5px;color:#333;left:444.00px;top:459.80px;transform:scaleX(1.0056);">Marks</div>
<div class="t" style="font-size:21.5px;color:#333;left:506.30px;top:523.20px;transform:scaleX(0.9899);">Automatic</div>
<div class="t" style="font-size:21.5px;color:#333;left:463.02px;top:623.60px;transform:scaleX(0.9748);">Color</div>
<div class="t" style="font-size:21.5px;color:#333;left:565.88px;top:623.60px;transform:scaleX(0.9185);">Size</div>
<div class="t" style="font-size:21.5px;color:#333;left:657.27px;top:623.60px;transform:scaleX(0.9715);">Label</div>
<div class="t" style="font-size:21.5px;color:#333;left:460.54px;top:719.50px;transform:scaleX(0.9890);">Detail</div>
<div class="t" style="font-size:21.5px;color:#333;left:556.17px;top:719.50px;transform:scaleX(0.9878);">Tooltip</div>
<div class="t" style="font-size:26px;color:#333;left:803.84px;top:150.80px;transform:scaleX(0.9527);">Columns</div>
<div class="t" style="font-size:26px;color:#333;left:803.14px;top:218.90px;transform:scaleX(0.9152);">Rows</div>
<div class="t" style="font-size:26px;color:#ffffff;left:1061.65px;top:149.70px;transform:scaleX(0.9473);">Country Region</div>
<div class="t" style="font-size:25px;color:#ffffff;left:1029.45px;top:218.60px;transform:scaleX(0.9625);">SUM(Cases)</div>
<div class="t" style="font-size:42px;color:#3a3a3a;left:773.41px;top:304.30px;transform:scaleX(0.9826);">Sheet 1</div>
<div class="t" style="font-size:25px;color:#262626;left:1404.63px;top:377.00px;-webkit-text-stroke:0.5px #262626;">Country Region</div>
<div class="t" style="font-size:25px;color:#6e6e6e;left:833.08px;top:491.10px;transform:scaleX(1.0420);">20M</div>
<div class="t" style="font-size:25px;color:#6e6e6e;left:834.42px;top:617.00px;transform:scaleX(1.0135);">15M</div>
<div class="t" style="font-size:25px;color:#6e6e6e;left:832.54px;top:742.70px;transform:scaleX(1.0620);">10M</div>
<div class="t" style="font-size:25px;color:#6e6e6e;left:847.47px;top:868.50px;transform:scaleX(1.0569);">5M</div>
<div class="t" style="font-size:25px;color:#6e6e6e;left:847.47px;top:977.00px;transform:scaleX(1.0569);">0M</div>
<div class="t" style="font-size:26px;color:#555;left:47.10px;top:1410.30px;transform:scaleX(0.9354);">Data Source</div>
<div class="t" style="font-size:26px;color:#555;font-weight:700;left:274.22px;top:1409.30px;transform:scaleX(0.9340);">Sheet 1</div>
<div class="t" style="font-size:20.5px;color:#222;left:24.46px;top:1463.90px;transform:scaleX(1.0471);">187 marks</div>
<div class="t" style="font-size:20.5px;color:#222;left:156.70px;top:1463.90px;transform:scaleX(1.0178);">1 row by 187 columns</div>
<div class="t" style="font-size:20.5px;color:#222;left:391.34px;top:1463.90px;transform:scaleX(1.0380);">SUM(Cases): 205,279,002</div>
<div class="t" style="font-size:20px;color:#3c7fa3;left:42.20px;top:390.60px;transform:scaleX(0.9077);">Abc</div>
<div class="t" style="font-size:20px;color:#3c7fa3;left:42.20px;top:432.67px;transform:scaleX(0.9077);">Abc</div>
<div class="t" style="font-size:20px;color:#3c7fa3;left:42.20px;top:474.74px;transform:scaleX(0.9077);">Abc</div>
<div class="t" style="font-size:20px;color:#3c7fa3;left:42.20px;top:516.81px;transform:scaleX(0.9077);">Abc</div>
<div class="t" style="font-size:20px;color:#3c7fa3;left:42.20px;top:685.09px;transform:scaleX(0.9077);">Abc</div>
<div class="t" style="font-size:20px;color:#3c7fa3;left:42.20px;top:727.16px;transform:scaleX(0.9077);">Abc</div>
<div class="t" style="font-size:20px;color:#3c7fa3;left:42.20px;top:769.23px;transform:scaleX(0.9077);">Abc</div>
<div class="t" style="font-size:25px;color:#6e6e6e;left:907.10px;top:1045.57px;transform:rotate(-90deg) scaleX(0.8780);">US</div>
<div class="t" style="font-size:25px;color:#6e6e6e;left:947.10px;top:1066.87px;transform:rotate(-90deg) scaleX(1.1094);">Italy</div>
<div class="t" style="font-size:25px;color:#6e6e6e;left:987.10px;top:1077.77px;transform:rotate(-90deg) scaleX(0.9878);">Spain</div>
<div class="t" style="font-size:25px;color:#6e6e6e;left:1027.10px;top:1195.19px;transform:rotate(-90deg) scaleX(1.0147);">United Kingdom</div>
<div class="t" style="font-size:25px;color:#6e6e6e;left:1067.10px;top:1080.88px;transform:rotate(-90deg) scaleX(1.0660);">Brazil</div>
<div class="t" style="font-size:25px;color:#6e6e6e;left:1107.10px;top:1091.52px;transform:rotate(-90deg) scaleX(0.9834);">France</div>
<div class="t" style="font-size:25px;color:#6e6e6e;left:1147.10px;top:1090.60px;transform:rotate(-90deg) scaleX(0.9742);">Russia</div>
<div class="t" style="font-size:25px;color:#6e6e6e;left:1187.10px;top:1117.15px;transform:rotate(-90deg) scaleX(0.9839);">Germany</div>
<div class="t" style="font-size:25px;color:#6e6e6e;left:1227.10px;top:1078.11px;transform:rotate(-90deg) scaleX(0.9486);">China</div>
<div class="t" style="font-size:25px;color:#6e6e6e;left:1267.10px;top:1061.53px;transform:rotate(-90deg) scaleX(1.0926);">Iran</div>
<div class="t" style="font-size:25px;color:#6e6e6e;left:1307.10px;top:1092.90px;transform:rotate(-90deg) scaleX(1.0188);">Turkey</div>
<div class="t" style="font-size:25px;color:#6e6e6e;left:1347.10px;top:1071.70px;transform:rotate(-90deg) scaleX(1.0245);">India</div>
<div class="t" style="font-size:25px;color:#6e6e6e;left:1387.10px;top:1067.56px;transform:rotate(-90deg) scaleX(1.0030);">Peru</div>
<div class="t" style="font-size:25px;color:#6e6e6e;left:1427.10px;top:1098.10px;transform:rotate(-90deg) scaleX(0.9358);">Canada</div>
<div class="t" style="font-size:25px;color:#6e6e6e;left:1467.10px;top:1108.33px;transform:rotate(-90deg) scaleX(1.0371);">Belgium</div>
<div class="t" style="font-size:25px;color:#6e6e6e;left:1507.10px;top:1156.55px;transform:rotate(-90deg) scaleX(1.0487);">Netherlands</div>
<div class="t" style="font-size:25px;color:#6e6e6e;left:1547.10px;top:1095.49px;transform:rotate(-90deg) scaleX(1.0168);">Mexico</div>
<div class="t" style="font-size:25px;color:#6e6e6e;left:1587.10px;top:1158.58px;transform:rotate(-90deg) scaleX(0.9949);">Saudi Arabia</div>
<div class="t" style="font-size:25px;color:#6e6e6e;left:1627.10px;top:1070.95px;transform:rotate(-90deg) scaleX(0.9820);">Chile</div>
<div class="t" style="font-size:25px;color:#6e6e6e;left:1667.10px;top:1151.33px;transform:rotate(-90deg) scaleX(1.0587);">Switzerland</div>
<div class="t" style="font-size:25px;color:#6e6e6e;left:1707.10px;top:1114.64px;transform:rotate(-90deg) scaleX(1.0440);">Pakistan</div>
<div class="t" style="font-size:25px;color:#6e6e6e;left:1747.10px;top:1114.71px;transform:rotate(-90deg) scaleX(1.0792);">Portugal</div>
<div class="t" style="font-size:25px;color:#6e6e6e;left:1787.10px;top:1104.07px;transform:rotate(-90deg) scaleX(0.9903);">Sweden</div>
<div class="t" style="font-size:25px;color:#6e6e6e;left:1827.10px;top:1107.93px;transform:rotate(-90deg) scaleX(0.9886);">Ecuador</div>
<div class="t" style="font-size:25px;color:#6e6e6e;left:1867.10px;top:1081.43px;transform:rotate(-90deg) scaleX(1.0485);">Qatar</div>
<div class="t" style="font-size:25px;color:#6e6e6e;left:1907.10px;top:1096.29px;transform:rotate(-90deg) scaleX(1.0700);">Ireland</div>
<div class="t" style="font-size:25px;color:#6e6e6e;left:1947.10px;top:1102.20px;transform:rotate(-90deg) scaleX(1.0264);">Belarus</div>
<div class="t" style="font-size:25px;color:#6e6e6e;left:1987.10px;top:1130.19px;transform:rotate(-90deg) scaleX(1.0109);">Singapore</div>
<div class="t" style="font-size:25px;color:#6e6e6e;left:2027.10px;top:1098.20px;transform:rotate(-90deg) scaleX(1.0543);">Austria</div>
<div class="t" style="font-size:25px;color:#6e6e6e;left:2067.10px;top:1258.90px;transform:rotate(-90deg) scaleX(1.0257);">United Arab Emirates</div>
<div class="t" style="font-size:25px;color:#262626;left:791.50px;top:737.06px;transform:rotate(-90deg) scaleX(0.9041);-webkit-text-stroke:0.5px #262626;">Cases</div>
<svg class="b" style="left:0;top:0" width="2116" height="1494"><rect x="2086" y="1010" width="16" height="300" fill="#fff"/><rect x="774.9" y="623.6" width="60" height="53.8" rx="17.5" fill="#fff" stroke="#e8461e" stroke-width="4.7"/><rect x="792" y="642" width="3.9" height="19.8" fill="#666"/><rect x="800.1" y="650" width="3.8" height="11.8" fill="#666"/><rect x="808.3" y="656" width="3.7" height="5.8" fill="#666"/></svg>
</div></body></html>
